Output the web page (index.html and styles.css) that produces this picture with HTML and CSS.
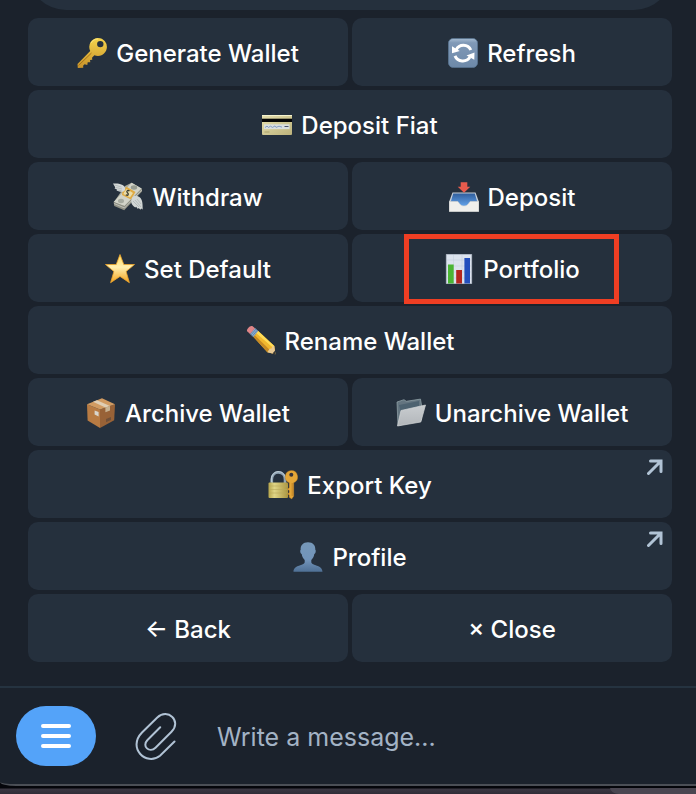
FILE: index.html
```html
<!DOCTYPE html>
<html lang="en">
<head>
<meta charset="utf-8">
<meta name="viewport" content="width=device-width, initial-scale=1">
<title>Wallet</title>
<link rel="stylesheet" href="styles.css">
</head>
<body>
<main class="window">
  <section class="chat">
    <div class="bubble"></div>
    <div class="keyboard">
      <button class="key" type="button">
        <svg class="icon" viewBox="0 0 30 30" aria-hidden="true">
          <defs><linearGradient id="gold" x1="0" y1="0" x2="0" y2="1"><stop offset="0" stop-color="#f5d44c"/><stop offset="1" stop-color="#c8922a"/></linearGradient></defs>
          <path fill="url(#gold)" fill-rule="evenodd" d="M21 0a9 9 0 1 1-3.600 17.300l-2.400 2.400.3 2-2.300.2.300 2.300-2.600.1-.4 2.700-2.700-.8-1.500 1.600.2 2-5.500.2-.3-4L13.200 13A9 9 0 0 1 21 0zM23.300 2.900a3.200 3.200 0 1 0 0 6.400 3.200 3.200 0 0 0 0-6.400z"/>
          <path d="M1.500 27.500 14.500 15" stroke="#a87318" stroke-width="1"/>
          <path d="M14 5a8 8 0 0 1 7-4" fill="none" stroke="#ffeb8a" stroke-width=".8"/>
        </svg>
        <span>Generate Wallet</span>
      </button>
      <button class="key" type="button">
        <svg class="icon" viewBox="0 0 30 30" aria-hidden="true">
          <defs><linearGradient id="tile" x1="0" y1="0" x2="0" y2="1"><stop offset="0" stop-color="#a7bdd3"/><stop offset=".15" stop-color="#8099b7"/><stop offset="1" stop-color="#6d89a9"/></linearGradient></defs>
          <rect x=".4" y=".4" width="29.200" height="29.200" rx="5" fill="url(#tile)" stroke="#587391" stroke-width=".8"/>
          <path d="M8.200 11.800A8 8 0 0 1 22.800 12M7 17.800A8.500 8.500 0 0 0 22 19" fill="none" stroke="#fff" stroke-width="3"/>
          <path d="M4 8.200 4 15.200 11.800 12.900zM26.500 14.500 26.300 21.800 18.500 17.400z" fill="#fff"/>
        </svg>
        <span>Refresh</span>
      </button>
      <button class="key wide" type="button">
        <svg class="icon" viewBox="0 0 30 30" aria-hidden="true">
          <defs><linearGradient id="card" x1="0" y1="0" x2="1" y2="1"><stop offset="0" stop-color="#e6dfad"/><stop offset="1" stop-color="#bdb37c"/></linearGradient></defs>
          <rect y="5" width="30" height="20" rx="1" fill="url(#card)"/>
          <path d="M0 5.500h30" stroke="#f6f3cf"/>
          <path d="M0 8.700h30V12H0z" fill="#050505"/>
          <path d="M2 14.300h25.500v4.800H2z" fill="#d9dedd"/>
          <path d="m3 17.500 2-1.400 1.500 1.300 2-1.200 2 1.200 2.500-1.500 1 1.500 3-1.200 3 .9" fill="none" stroke="#7893bd" stroke-width=".9"/>
          <path d="M22.500 16.500h4" stroke="#48506a"/>
          <path d="M2.500 22h5" stroke="#aaa16b"/>
        </svg>
        <span>Deposit Fiat</span>
      </button>
      <button class="key" type="button">
        <svg class="icon" viewBox="0 0 30 30" aria-hidden="true">
          <path d="m1 20 10 5.500L29 9v-2L18.600.7 12 4z" fill="#a8a99b"/>
          <path d="M.6 20 18.600.7 28.700 6.500 11.500 24z" fill="#d2d3c8"/>
          <path d="m.6 20 .6 4 10 4.300L29 9.500l-.3-3L11.500 24z" fill="#8f9084"/>
          <path d="M1 21.500 11.500 26 28.800 8" fill="none" stroke="#d5d5ce" stroke-width=".7"/>
          <ellipse cx="21" cy="5.500" rx="3.200" ry="2.200" fill="#979c90"/>
          <ellipse cx="8" cy="19" rx="3" ry="2.200" fill="#a6aa9f"/>
          <path d="m9.500 9 4-4.300 9 5.300-4.500 7.500-9-4.500z" fill="#dfaa42"/>
          <path d="m11.300 10 2.400-3 6.300 4-3 4.400-6.600-3.300z" fill="#eadca8"/>
          <path d="M16.500 9c-2-1.300-3.600.4-2 1.800s.6 3.400-1.700 1.900" fill="none" stroke="#3b3d32" stroke-width="1.300"/>
          <path d="M0 1.600c3-.4 6-.3 9 1.200 2 1 3.300 2.400 3.200 4.500-.5 2.700-3.500 2.900-6 2.100L3.500 8.600l.7-.8-2.700-1.600.8-.8z" fill="#d5d9d8"/>
          <path d="m1.500 3 7 2M3 5.500l6 1.500M4.500 8l4 .6" stroke="#9fa7aa" stroke-width=".6"/>
          <path d="M19.500 15c2-2 5-1.500 7.500.5 2 1.800 2.800 5 2.700 12l-1.600-1-.5 1.200-2-1.700-.7 1-1.800-2.200-.8.700c-2-1.300-3.700-2.800-4-5-.2-2 .2-4.200 1.200-5.500z" fill="#d1d6d5"/>
          <path d="m20 19 6 6M22 18l6 7M24 17l4 5" stroke="#a1aaab" stroke-width=".6"/>
        </svg>
        <span>Withdraw</span>
      </button>
      <button class="key" type="button">
        <svg class="icon" viewBox="0 0 30 30" aria-hidden="true">
          <defs><linearGradient id="tray" x1="0" y1="0" x2="0" y2="1"><stop offset="0" stop-color="#305e9c"/><stop offset="1" stop-color="#65a5ed"/></linearGradient></defs>
          <path d="M3.500 10.500h23L30 20v9.500H0V20z" fill="#c9d0d9"/>
          <path d="M4.200 11.500h21.600l2.500 8.500-7 1.500-4 3h-5l-3-3L1.700 20z" fill="url(#tray)"/>
          <path d="M.4 19.500h8.200c1.400 0 1.700 4.500 6.400 4.500s5-4.500 6.400-4.500h8.200v10H.4z" fill="#efefec" stroke="#d2d2ce" stroke-width=".6"/>
          <path d="M11.700.2h6.600v4.600h3L15 10.700 8.700 4.800h3z" fill="#e75b4d"/>
        </svg>
        <span>Deposit</span>
      </button>
      <button class="key" type="button">
        <svg class="icon" viewBox="0 0 30 30" aria-hidden="true">
          <defs><linearGradient id="star" x1="0" y1="0" x2="0" y2="1"><stop offset="0" stop-color="#ffd85a"/><stop offset=".45" stop-color="#fff0b0"/><stop offset="1" stop-color="#f4a31d"/></linearGradient></defs>
          <path d="m15 .5 3.800 10h10.700l-8.400 7 3.300 11.200L15 22.400l-9.400 6.300 3.300-11.200-8.400-7h10.700z" fill="url(#star)" stroke="#eca52c" stroke-width=".8" stroke-linejoin="round"/>
        </svg>
        <span>Set Default</span>
      </button>
      <button class="key marked" type="button">
        <svg class="icon" viewBox="0 0 30 30" aria-hidden="true">
          <path d="M2.300.3h25.400v29.400H2.300z" fill="#dce3ee" stroke="#bcc6d2" stroke-width=".6"/>
          <path d="M3 6h24M3 12h24M3 18h24M3 24h24M9.500 1v28M18 1v28" stroke="#c7d1df" stroke-width=".6"/>
          <path d="M4 10.500h5.700v19H4z" fill="#4bb534"/>
          <path d="M12.200 16H18v13.500h-5.800z" fill="#b5261e"/>
          <path d="M20.400 4H26v25.500h-5.600z" fill="#234fbd"/>
        </svg>
        <span>Portfolio</span>
      </button>
      <button class="key wide" type="button">
        <svg class="icon" viewBox="0 0 30 30" aria-hidden="true">
          <path d="m7.300 10.800 4.700-6L28.300 20l1.100 8.300-8-2.100z" fill="#f1b82e"/>
          <path d="m10.300 7.200 1.800-2.200L28.300 20l-1.200 1.800z" fill="#ffdc57"/>
          <path d="m7.300 10.800 1.300-1.700 15 14.700-2.200 2.400z" fill="#c78b24"/>
          <path d="m21.400 26.200 2.200-3.400 2-.2.500-2 2.200-.6 1.100 8.300z" fill="#e8c994"/>
          <path d="m26.500 27.500 2.400-2.700.8 3.900z" fill="#373532"/>
          <path d="m4 8 5-6 3.200 2.900-5 6.200z" fill="#8caed0"/>
          <path d="m5 9 5-6M6.200 10.200l5-6" stroke="#577da9" stroke-width=".8"/>
          <path d="M1.200 5.200C-.2 3.700 4.500-1.300 6.600.3L9 2.200 4 8z" fill="#df8588"/>
        </svg>
        <span>Rename Wallet</span>
      </button>
      <button class="key" type="button">
        <svg class="icon" viewBox="0 0 30 30" aria-hidden="true">
          <path d="M1 6.300 14 11.500V30L1.600 22.500z" fill="#b87b43"/>
          <path d="m14 11.500 15-5.300-.8 16L14 30z" fill="#986237"/>
          <path d="M1 6.300 16 .2l13 6-15 5.300z" fill="#d19b62"/>
          <path d="m7 3.800 4-1.600 13 5.700-4.600 1.700z" fill="#dfceb4"/>
          <path d="m19.400 9.600 4.600-1.700v4.500l-4.600 1.800z" fill="#c7b291"/>
          <path d="m8.600 12.500 4 1.600v4.500l-4-2z" fill="#d9d5cc"/>
          <path d="m20 21 5-2v3l-5 2.200z" fill="#705039"/>
        </svg>
        <span>Archive Wallet</span>
      </button>
      <button class="key" type="button">
        <svg class="icon" viewBox="0 0 30 30" aria-hidden="true">
          <defs><linearGradient id="folder" x1="0" y1="0" x2="0" y2="1"><stop offset="0" stop-color="#c9cdd0"/><stop offset="1" stop-color="#b2b6ba"/></linearGradient></defs>
          <path d="m1 4 7-2.300 2.300 1.600 14.200-2.200 1 6v15L2 27.500z" fill="#647580" stroke="#97a7ae" stroke-width=".7"/>
          <path d="m3 7 20-4v5L5 15z" fill="#4d6270"/>
          <path d="M5 12.500 29.500 7l-4.700 17L1.500 28z" fill="url(#folder)" stroke="#d3d6d7" stroke-width=".7"/>
        </svg>
        <span>Unarchive Wallet</span>
      </button>
      <button class="key wide" type="button">
        <svg class="icon" viewBox="0 0 30 30" aria-hidden="true">
          <defs><linearGradient id="brass" x1="0" y1="0" x2="1" y2="0"><stop offset="0" stop-color="#b6a54b"/><stop offset=".3" stop-color="#e0d586"/><stop offset="1" stop-color="#aa9540"/></linearGradient></defs>
          <path d="M3.800 14V9.500C3.800-.2 17 .1 17 9.500V14" fill="none" stroke="#90a4b4" stroke-width="2.600"/>
          <path d="M3.300 12V9C4-.5 16-.8 17.500 8" fill="none" stroke="#cfdce3" stroke-width=".8"/>
          <rect x=".5" y="12.500" width="19.500" height="15.500" rx="1" fill="url(#brass)"/>
          <path d="M1 16h19M1 19.500h19M1 23h19" stroke="#b8aa5c" stroke-width=".6"/>
          <path d="M23.300.5a6.400 6.400 0 0 1 2.400 12.300v13.500l-2 2.600-2.500-1.600V25l-1.700-1 1.700-1.500v-2l-1.900-1.300 1.900-1.400v-5A6.400 6.400 0 0 1 23.300.5z" fill="#e4a637" stroke="#bc7b22" stroke-width=".4"/>
          <circle cx="23.300" cy="4.700" r="2" fill="#36333a"/>
          <path d="M24.200 13v13" stroke="#b77a23" stroke-width=".8"/>
        </svg>
        <span>Export Key</span>
        <svg class="out" viewBox="0 0 16 16" aria-hidden="true"><path d="M1.500 14.500 14 2M3.500 2H14v10.500"/></svg>
      </button>
      <button class="key wide" type="button">
        <svg class="icon" viewBox="0 0 30 30" aria-hidden="true">
          <defs><linearGradient id="bust" x1="0" y1="0" x2="0" y2="1"><stop offset="0" stop-color="#7698b9"/><stop offset=".6" stop-color="#7294ba"/><stop offset="1" stop-color="#4f7095"/></linearGradient></defs>
          <path d="M15 .2c5 0 7.700 3.300 7.300 7.500.9.400.4 4-1 4.300-.4 3-1.500 4.400-3 6v2c0 4 11.200 2.500 11.200 9.700H.5C.5 22.500 11.700 24 11.700 20v-2c-1.500-1.600-2.600-3-3-6-1.400-.3-1.900-3.900-1-4.300C7.300 3.500 10 .2 15 .2z" fill="url(#bust)"/>
        </svg>
        <span>Profile</span>
        <svg class="out" viewBox="0 0 16 16" aria-hidden="true"><path d="M1.500 14.500 14 2M3.500 2H14v10.500"/></svg>
      </button>
      <button class="key" type="button">← Back</button>
      <button class="key" type="button">× Close</button>
    </div>
  </section>
  <form class="composer">
    <button class="menu" type="button" aria-label="Menu">
      <svg viewBox="0 0 30 24" aria-hidden="true"><path d="M2 2h26M2 12h26M2 22h26"/></svg>
    </button>
    <button class="attach" type="button" aria-label="Attach file">
      <svg viewBox="0 0 42 48" aria-hidden="true"><path d="M25.200 15.300 12.500 28c-6.200 6.200 2.100 13.600 8 7.700L36.500 19.700C47 9 32.800-4.200 22.300 5.500L7 20.500C-8 36 11.300 54.500 25 43.700L39.500 29.500"/></svg>
    </button>
    <input class="message" type="text" placeholder="Write a message..." aria-label="Message">
  </form>
</main>
<div class="desktop"><div class="dock"></div></div>
</body>
</html>
```
FILE: styles.css
```css
*,
*::after {
  box-sizing: border-box;
}

body {
  margin: 0;
  min-height: 100vh;
  display: flex;
  flex-direction: column;
  background: #05060b;
  color: #fff;
  font-family: Inter, "Liberation Sans", sans-serif;
}

button,
input {
  margin: 0;
  padding: 0;
  border: 0;
  background: none;
  color: inherit;
  font: inherit;
}

.window {
  flex: 1;
  display: flex;
  flex-direction: column;
  background: #1b222c;
  border-bottom: 2px solid #4b4f56;
  border-bottom-left-radius: 16px 4px;
}

.chat {
  flex: 1;
  padding: 0 24px 24px 28px;
  overflow: hidden;
}

.bubble {
  height: 80px;
  margin: -70px 0 8px;
  border-radius: 38px;
  background: #25303d;
}

.keyboard {
  display: grid;
  grid-template-columns: 1fr 1fr;
  gap: 4px;
}

.key {
  position: relative;
  display: flex;
  align-items: center;
  justify-content: center;
  gap: 9px;
  height: 68px;
  padding-top: 4px;
  border-radius: 10px;
  background: #25303d;
  font-size: 24px;
  line-height: 32px;
  font-weight: 500;
}

.wide {
  grid-column: 1 / -1;
}

.icon {
  width: 30px;
  height: 30px;
  margin-bottom: 2px;
}

.out {
  position: absolute;
  top: 9px;
  right: 9px;
  width: 16px;
  height: 16px;
  fill: none;
  stroke: #b1c3d5;
  stroke-width: 3;
  stroke-linecap: round;
}

.marked::after {
  content: "";
  position: absolute;
  z-index: 1;
  top: 0;
  bottom: -2px;
  left: calc(50% - 108px);
  width: 215px;
  border: 5px solid #ef3e23;
}

.composer {
  display: flex;
  align-items: center;
  height: 98px;
  padding: 0 16px;
  border-top: 2px solid #253340;
}

.menu {
  display: grid;
  place-items: center;
  width: 80px;
  height: 60px;
  border-radius: 30px;
  background: #54a3f9;
}

.menu svg {
  width: 30px;
  height: 24px;
  fill: none;
  stroke: #fff;
  stroke-width: 4;
  stroke-linecap: round;
}

.attach {
  margin: 0 40px 0 39px;
  width: 42px;
  height: 48px;
}

.attach svg {
  display: block;
  width: 42px;
  height: 48px;
  fill: none;
  stroke: #b1c3d5;
  stroke-width: 2;
  stroke-linecap: round;
}

.message {
  flex: 1;
  min-width: 0;
  height: 60px;
  padding-top: 2px;
  outline: none;
  font-size: 25px;
}

.message::placeholder {
  color: #a3b3c5;
  opacity: 1;
}

.desktop {
  height: 8px;
  padding-top: 2px;
  background: linear-gradient(#05060b 2px, #3b3742 3px, #302c37);
}

.dock {
  height: 6px;
  margin-left: calc(100% - 86px);
  border-bottom-left-radius: 12px 8px;
  background: #4a4651;
}
```
